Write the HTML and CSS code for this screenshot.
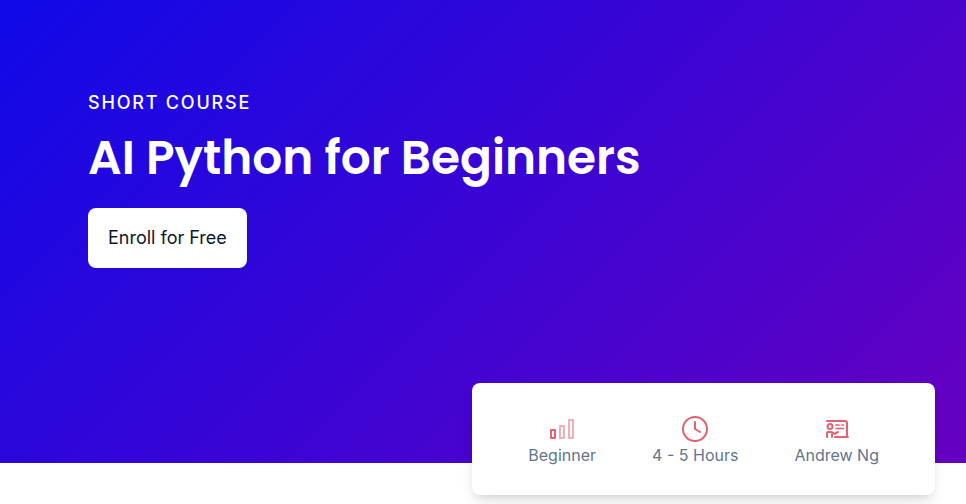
FILE: index.html
```html
<!DOCTYPE html>
<html lang="en">
<head>
  <meta charset="utf-8">
  <meta name="viewport" content="width=device-width, initial-scale=1">
  <title>AI Python for Beginners</title>
  <link rel="stylesheet" href="styles.css">
</head>
<body>
  <main>
    <header class="hero">
      <p class="eyebrow">Short Course</p>
      <h1 class="title">AI Python for Beginners</h1>
      <button class="enroll" type="button">Enroll for Free</button>
    </header>
    <ul class="facts">
      <li class="fact">
        <svg class="icon" width="28" height="28" viewBox="0 0 28 28" fill="none" stroke="currentColor" stroke-width="2" stroke-linejoin="round" aria-hidden="true">
          <rect x="3" y="15" width="4" height="8"/>
          <rect x="12" y="11" width="4" height="12" opacity=".5"/>
          <rect x="21" y="5" width="4" height="18" opacity=".5"/>
        </svg>
        <span>Beginner</span>
      </li>
      <li class="fact">
        <svg class="icon" width="28" height="28" viewBox="0 0 28 28" fill="none" stroke="currentColor" stroke-width="2" stroke-linecap="round" stroke-linejoin="round" aria-hidden="true">
          <circle cx="14" cy="14" r="12"/>
          <path d="M14 7v7l5 3"/>
        </svg>
        <span>4 - 5 Hours</span>
      </li>
      <li class="fact">
        <svg class="icon" width="28" height="28" viewBox="0 0 28 28" fill="none" stroke="currentColor" stroke-width="2" stroke-linecap="round" stroke-linejoin="round" aria-hidden="true">
          <path d="M4 6h18q2 0 2 2v14M12 22h13"/>
          <circle cx="7" cy="11.500" r="2.500"/>
          <path d="M4 22v-4q0-1 1-1h3q1 0 2 1l1 .5q1 .5 2-.5l2-1M9 22v-3" stroke-width="2"/>
          <path d="M13 10h3M19 10h1.500M13 13.500h7.500" stroke-width="1.700"/>
        </svg>
        <span>Andrew Ng</span>
      </li>
    </ul>
  </main>
</body>
</html>
```
FILE: styles.css
```css
* {
  box-sizing: border-box;
}

body {
  min-height: 100vh;
  margin: 0;
  background: #fff;
  font-family: Inter, "Liberation Sans", sans-serif;
}

main {
  padding-bottom: 9px;
}

.hero {
  display: flex;
  flex-direction: column;
  align-items: flex-start;
  padding: 89px 88px 195px;
  background: linear-gradient(135deg, #1009e8, #6600c0);
  color: #fff;
}

.eyebrow {
  margin: 0 0 11px;
  font-size: 18px;
  font-weight: 500;
  line-height: 28px;
  letter-spacing: 0.1em;
  text-transform: uppercase;
}

.title {
  margin: 0 0 20px;
  font-family: Poppins, Inter, sans-serif;
  font-size: 47px;
  font-weight: 600;
  line-height: 60px;
}

.enroll {
  padding: 16px 20px;
  border: 0;
  border-radius: 8px;
  background: #fff;
  color: #0f172a;
  font-family: inherit;
  font-size: 18px;
  line-height: 28px;
  cursor: pointer;
}

.facts {
  display: flex;
  justify-content: space-evenly;
  width: 47.9%;
  margin: -80px 31px 0 auto;
  padding: 32px 0 28px;
  border-radius: 8px;
  background: #fff;
  box-shadow: 0 10px 15px -3px rgb(0 0 0 / 10%), 0 4px 6px -2px rgb(0 0 0 / 8%);
  list-style: none;
}

.fact {
  display: flex;
  flex-direction: column;
  align-items: center;
  color: #64748b;
  font-size: 16px;
  line-height: 24px;
}

.icon {
  color: #e4626f;
}
```
